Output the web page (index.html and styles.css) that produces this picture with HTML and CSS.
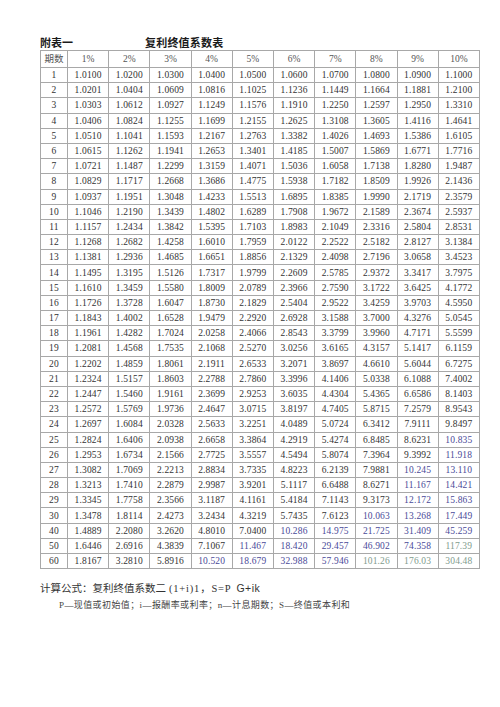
FILE: index.html
```html
<!DOCTYPE html>
<html lang="zh-CN">
<head>
<meta charset="utf-8">
<title>复利终值系数表</title>
<link rel="stylesheet" href="styles.css">
</head>
<body>
<div class="page">
  <div class="heading">
    <span class="appendix">附表一</span>
    <span class="title">复利终值系数表</span>
  </div>
  <table class="factors">
    <colgroup>
      <col class="c-n"><col><col><col><col><col><col><col><col><col><col>
    </colgroup>
    <thead>
      <tr><th>期数</th><th>1%</th><th>2%</th><th>3%</th><th>4%</th><th>5%</th><th>6%</th><th>7%</th><th>8%</th><th>9%</th><th>10%</th></tr>
    </thead>
    <tbody>
      <tr><td>1</td><td>1.0100</td><td>1.0200</td><td>1.0300</td><td>1.0400</td><td>1.0500</td><td>1.0600</td><td>1.0700</td><td>1.0800</td><td>1.0900</td><td>1.1000</td></tr>
      <tr><td>2</td><td>1.0201</td><td>1.0404</td><td>1.0609</td><td>1.0816</td><td>1.1025</td><td>1.1236</td><td>1.1449</td><td>1.1664</td><td>1.1881</td><td>1.2100</td></tr>
      <tr><td>3</td><td>1.0303</td><td>1.0612</td><td>1.0927</td><td>1.1249</td><td>1.1576</td><td>1.1910</td><td>1.2250</td><td>1.2597</td><td>1.2950</td><td>1.3310</td></tr>
      <tr><td>4</td><td>1.0406</td><td>1.0824</td><td>1.1255</td><td>1.1699</td><td>1.2155</td><td>1.2625</td><td>1.3108</td><td>1.3605</td><td>1.4116</td><td>1.4641</td></tr>
      <tr><td>5</td><td>1.0510</td><td>1.1041</td><td>1.1593</td><td>1.2167</td><td>1.2763</td><td>1.3382</td><td>1.4026</td><td>1.4693</td><td>1.5386</td><td>1.6105</td></tr>
      <tr><td>6</td><td>1.0615</td><td>1.1262</td><td>1.1941</td><td>1.2653</td><td>1.3401</td><td>1.4185</td><td>1.5007</td><td>1.5869</td><td>1.6771</td><td>1.7716</td></tr>
      <tr><td>7</td><td>1.0721</td><td>1.1487</td><td>1.2299</td><td>1.3159</td><td>1.4071</td><td>1.5036</td><td>1.6058</td><td>1.7138</td><td>1.8280</td><td>1.9487</td></tr>
      <tr><td>8</td><td>1.0829</td><td>1.1717</td><td>1.2668</td><td>1.3686</td><td>1.4775</td><td>1.5938</td><td>1.7182</td><td>1.8509</td><td>1.9926</td><td>2.1436</td></tr>
      <tr><td>9</td><td>1.0937</td><td>1.1951</td><td>1.3048</td><td>1.4233</td><td>1.5513</td><td>1.6895</td><td>1.8385</td><td>1.9990</td><td>2.1719</td><td>2.3579</td></tr>
      <tr><td>10</td><td>1.1046</td><td>1.2190</td><td>1.3439</td><td>1.4802</td><td>1.6289</td><td>1.7908</td><td>1.9672</td><td>2.1589</td><td>2.3674</td><td>2.5937</td></tr>
      <tr><td>11</td><td>1.1157</td><td>1.2434</td><td>1.3842</td><td>1.5395</td><td>1.7103</td><td>1.8983</td><td>2.1049</td><td>2.3316</td><td>2.5804</td><td>2.8531</td></tr>
      <tr><td>12</td><td>1.1268</td><td>1.2682</td><td>1.4258</td><td>1.6010</td><td>1.7959</td><td>2.0122</td><td>2.2522</td><td>2.5182</td><td>2.8127</td><td>3.1384</td></tr>
      <tr><td>13</td><td>1.1381</td><td>1.2936</td><td>1.4685</td><td>1.6651</td><td>1.8856</td><td>2.1329</td><td>2.4098</td><td>2.7196</td><td>3.0658</td><td>3.4523</td></tr>
      <tr><td>14</td><td>1.1495</td><td>1.3195</td><td>1.5126</td><td>1.7317</td><td>1.9799</td><td>2.2609</td><td>2.5785</td><td>2.9372</td><td>3.3417</td><td>3.7975</td></tr>
      <tr><td>15</td><td>1.1610</td><td>1.3459</td><td>1.5580</td><td>1.8009</td><td>2.0789</td><td>2.3966</td><td>2.7590</td><td>3.1722</td><td>3.6425</td><td>4.1772</td></tr>
      <tr><td>16</td><td>1.1726</td><td>1.3728</td><td>1.6047</td><td>1.8730</td><td>2.1829</td><td>2.5404</td><td>2.9522</td><td>3.4259</td><td>3.9703</td><td>4.5950</td></tr>
      <tr><td>17</td><td>1.1843</td><td>1.4002</td><td>1.6528</td><td>1.9479</td><td>2.2920</td><td>2.6928</td><td>3.1588</td><td>3.7000</td><td>4.3276</td><td>5.0545</td></tr>
      <tr><td>18</td><td>1.1961</td><td>1.4282</td><td>1.7024</td><td>2.0258</td><td>2.4066</td><td>2.8543</td><td>3.3799</td><td>3.9960</td><td>4.7171</td><td>5.5599</td></tr>
      <tr><td>19</td><td>1.2081</td><td>1.4568</td><td>1.7535</td><td>2.1068</td><td>2.5270</td><td>3.0256</td><td>3.6165</td><td>4.3157</td><td>5.1417</td><td>6.1159</td></tr>
      <tr><td>20</td><td>1.2202</td><td>1.4859</td><td>1.8061</td><td>2.1911</td><td>2.6533</td><td>3.2071</td><td>3.8697</td><td>4.6610</td><td>5.6044</td><td>6.7275</td></tr>
      <tr><td>21</td><td>1.2324</td><td>1.5157</td><td>1.8603</td><td>2.2788</td><td>2.7860</td><td>3.3996</td><td>4.1406</td><td>5.0338</td><td>6.1088</td><td>7.4002</td></tr>
      <tr><td>22</td><td>1.2447</td><td>1.5460</td><td>1.9161</td><td>2.3699</td><td>2.9253</td><td>3.6035</td><td>4.4304</td><td>5.4365</td><td>6.6586</td><td>8.1403</td></tr>
      <tr><td>23</td><td>1.2572</td><td>1.5769</td><td>1.9736</td><td>2.4647</td><td>3.0715</td><td>3.8197</td><td>4.7405</td><td>5.8715</td><td>7.2579</td><td>8.9543</td></tr>
      <tr><td>24</td><td>1.2697</td><td>1.6084</td><td>2.0328</td><td>2.5633</td><td>3.2251</td><td>4.0489</td><td>5.0724</td><td>6.3412</td><td>7.9111</td><td>9.8497</td></tr>
      <tr><td>25</td><td>1.2824</td><td>1.6406</td><td>2.0938</td><td>2.6658</td><td>3.3864</td><td>4.2919</td><td>5.4274</td><td>6.8485</td><td>8.6231</td><td class="b">10.835</td></tr>
      <tr><td>26</td><td>1.2953</td><td>1.6734</td><td>2.1566</td><td>2.7725</td><td>3.5557</td><td>4.5494</td><td>5.8074</td><td>7.3964</td><td>9.3992</td><td class="b">11.918</td></tr>
      <tr><td>27</td><td>1.3082</td><td>1.7069</td><td>2.2213</td><td>2.8834</td><td>3.7335</td><td>4.8223</td><td>6.2139</td><td>7.9881</td><td class="b">10.245</td><td class="b">13.110</td></tr>
      <tr><td>28</td><td>1.3213</td><td>1.7410</td><td>2.2879</td><td>2.9987</td><td>3.9201</td><td>5.1117</td><td>6.6488</td><td>8.6271</td><td class="b">11.167</td><td class="b">14.421</td></tr>
      <tr><td>29</td><td>1.3345</td><td>1.7758</td><td>2.3566</td><td>3.1187</td><td>4.1161</td><td>5.4184</td><td>7.1143</td><td>9.3173</td><td class="b">12.172</td><td class="b">15.863</td></tr>
      <tr><td>30</td><td>1.3478</td><td>1.8114</td><td>2.4273</td><td>3.2434</td><td>4.3219</td><td>5.7435</td><td>7.6123</td><td class="b">10.063</td><td class="b">13.268</td><td class="b">17.449</td></tr>
      <tr><td>40</td><td>1.4889</td><td>2.2080</td><td>3.2620</td><td>4.8010</td><td>7.0400</td><td class="b">10.286</td><td class="b">14.975</td><td class="b">21.725</td><td class="b">31.409</td><td class="b">45.259</td></tr>
      <tr><td>50</td><td>1.6446</td><td>2.6916</td><td>4.3839</td><td>7.1067</td><td class="b">11.467</td><td class="b">18.420</td><td class="b">29.457</td><td class="b">46.902</td><td class="b">74.358</td><td class="g">117.39</td></tr>
      <tr><td>60</td><td>1.8167</td><td>3.2810</td><td>5.8916</td><td class="b">10.520</td><td class="b">18.679</td><td class="b">32.988</td><td class="b">57.946</td><td class="g">101.26</td><td class="g">176.03</td><td class="g">304.48</td></tr>
    </tbody>
  </table>
  <p class="formula">计算公式：复利终值系数二<span class="latin">(1+i)1，S=P</span><span class="sans">G+ik</span></p>
  <p class="legend">P—现值或初始值；i—报酬率或利率；n—计息期数；S—终值或本利和</p>
</div>
</body>
</html>
```

FILE: styles.css
```css
html, body {
  margin: 0;
  padding: 0;
  background: #ffffff;
}

.page {
  padding: 34px 20px 0 40px;
  color: #2e2e2e;
  font-family: "Liberation Serif", "Noto Sans CJK SC", serif;
}

.heading {
  display: flex;
  align-items: center;
  height: 16px;
  font-family: "Noto Sans CJK SC", sans-serif;
  font-weight: 700;
  font-size: 11px;
  color: #1a1a1a;
}

.appendix {
  width: 105px;
}

.title {
  letter-spacing: 0.2px;
}

.factors {
  width: 440px;
  border-collapse: collapse;
  table-layout: fixed;
  border: 1px solid #8a8a8a;
  font-size: 9.5px;
  line-height: 10px;
}

.c-n {
  width: 27px;
}

.factors th,
.factors td {
  border: 1px solid #a8a8a8;
  padding: 0;
  text-align: center;
  vertical-align: middle;
  white-space: nowrap;
}

.factors thead tr {
  height: 17px;
}

.factors th {
  font-weight: 400;
  color: #555555;
  font-family: "Liberation Serif", "Noto Sans CJK SC", serif;
}

.factors tbody tr {
  height: 15.2px;
}

.factors td {
  color: #333333;
  letter-spacing: 0.15px;
}

.factors td.b {
  color: #4a4a98;
}

.factors td.g {
  color: #7f9c8e;
}

.formula {
  margin: 12px 0 0 0;
  font-size: 10.5px;
  line-height: 14px;
  color: #333333;
  font-family: "Liberation Serif", "Noto Sans CJK SC", serif;
}

.latin {
  margin-left: 3px;
  letter-spacing: 0.8px;
}

.sans {
  margin-left: 5px;
  font-family: "Liberation Sans", sans-serif;
  letter-spacing: 0.5px;
}

.legend {
  margin: 3px 0 0 19px;
  font-size: 9px;
  line-height: 12px;
  color: #444444;
  letter-spacing: 0.4px;
}
```
